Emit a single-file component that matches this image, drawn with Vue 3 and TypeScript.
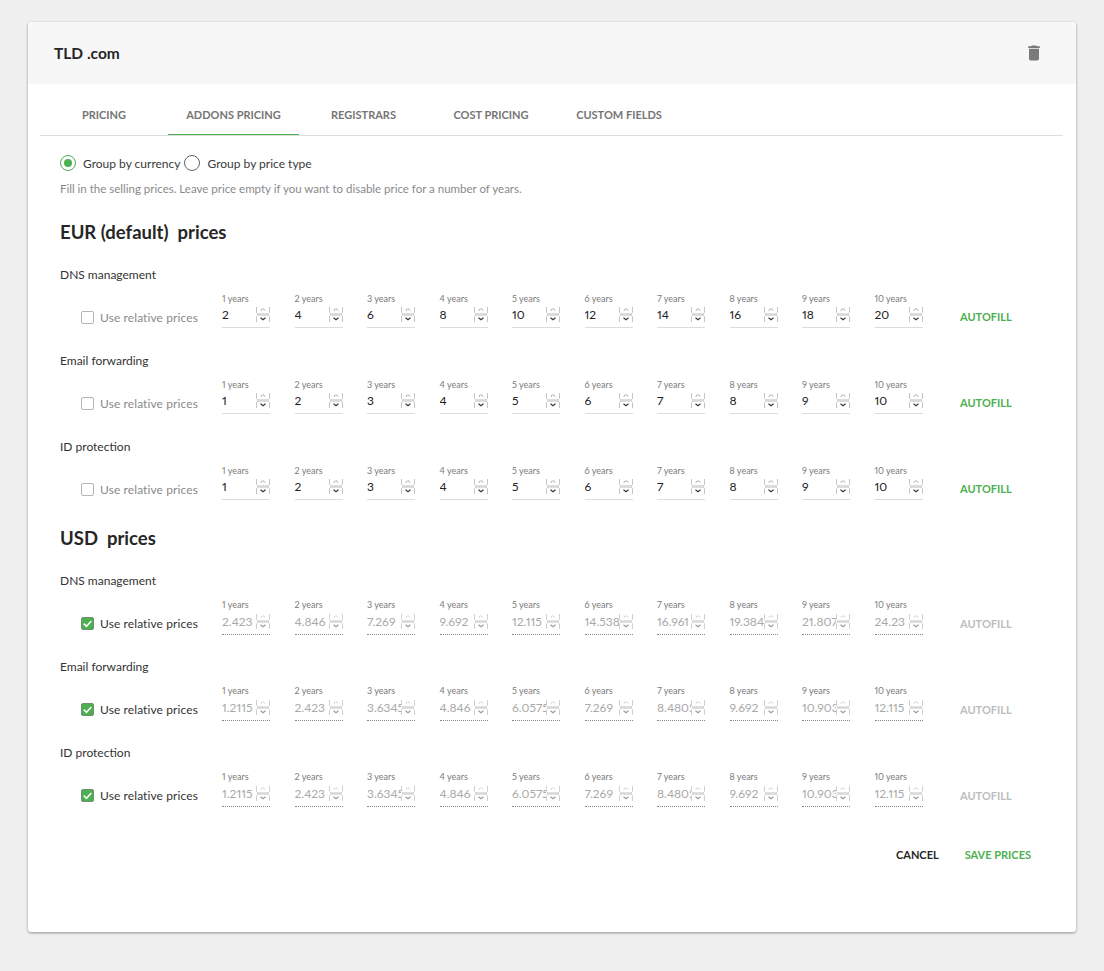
<script setup lang="ts">
interface Addon { name: string; values: string[] }
interface Group { title: string; relative: boolean; addons: Addon[] }

const tabs = ['PRICING', 'ADDONS PRICING', 'REGISTRARS', 'COST PRICING', 'CUSTOM FIELDS']

const seq = (m: number) => Array.from({ length: 10 }, (_, i) => String((i + 1) * m))

const groups: Group[] = [
  {
    title: 'EUR (default)  prices',
    relative: false,
    addons: [
      { name: 'DNS management', values: seq(2) },
      { name: 'Email forwarding', values: seq(1) },
      { name: 'ID protection', values: seq(1) },
    ],
  },
  {
    title: 'USD  prices',
    relative: true,
    addons: [
      { name: 'DNS management', values: ['2.423', '4.846', '7.269', '9.692', '12.115', '14.538', '16.961', '19.384', '21.807', '24.23'] },
      { name: 'Email forwarding', values: ['1.2115', '2.423', '3.6345', '4.846', '6.0575', '7.269', '8.4805', '9.692', '10.9035', '12.115'] },
      { name: 'ID protection', values: ['1.2115', '2.423', '3.6345', '4.846', '6.0575', '7.269', '8.4805', '9.692', '10.9035', '12.115'] },
    ],
  },
]
</script>

<template>
  <div class="page">
    <section class="card">
      <header class="head">
        <h1>TLD .com</h1>
        <svg class="trash" viewBox="0 0 24 24" width="20" height="20"><path d="M19,4H15.5L14.5,3H9.5L8.5,4H5V6H19M6,19A2,2 0 0,0 8,21H16A2,2 0 0,0 18,19V7H6V19Z" /></svg>
      </header>

      <nav class="tabs">
        <div v-for="(t, i) in tabs" :key="t" class="tab" :class="{ active: i === 1 }">{{ t }}</div>
      </nav>

      <div class="body">
        <div class="radios">
          <label class="radio"><span class="dot on"></span>Group by currency</label>
          <label class="radio"><span class="dot"></span>Group by price type</label>
        </div>
        <p class="hint">Fill in the selling prices. Leave price empty if you want to disable price for a number of years.</p>

        <div v-for="g in groups" :key="g.title" class="group">
          <h2>{{ g.title }}</h2>
          <div v-for="a in g.addons" :key="a.name" class="addon">
            <div class="addon-name">{{ a.name }}</div>
            <div class="controls">
              <label class="check" :class="{ on: g.relative }">
                <span class="box">
                  <svg v-if="g.relative" viewBox="0 0 13 13" width="13" height="13"><path d="M2.8 6.6l2.7 2.7 4.8-5.2" fill="none" stroke="#fff" stroke-width="1.5" /></svg>
                </span>
                Use relative prices
              </label>
              <div class="fields">
                <div v-for="(v, i) in a.values" :key="i" class="field" :class="{ off: g.relative }">
                  <span class="year">{{ i + 1 }} years</span>
                  <div class="input-wrap">
                    <input type="number" :value="v" :disabled="g.relative" />
                    <svg class="spin" viewBox="0 0 14 15" width="14" height="15">
                      <path class="spin-frame" d="M.5 0V5.5L2 7H12L13.5 5.5V0M.5 15V9.5L2 8H12L13.5 9.5V15" />
                      <path class="spin-band" d="M1 6.5H13V8.5H1Z" />
                      <path class="spin-up" d="M4.8 3.4L7 1.6L9.2 3.4" />
                      <path class="spin-down" d="M4.5 10.8L7 12.8L9.5 10.8" />
                    </svg>
                  </div>
                </div>
              </div>
              <span class="autofill" :class="{ off: g.relative }">AUTOFILL</span>
            </div>
          </div>
        </div>

        <div class="actions">
          <span class="cancel">CANCEL</span>
          <span class="save">SAVE PRICES</span>
        </div>
      </div>
    </section>
  </div>
</template>

<style>
html, body { background: #f0f0f0; }
</style>

<style scoped>
.page {
  padding: 22px 28px 39px;
  font-family: Lato, "Liberation Sans", sans-serif;
  font-variant-numeric: proportional-nums;
  color: #2b2b2b;
}
.card {
  height: 910px;
  background: #fff;
  border-radius: 3px;
  box-shadow: 0 1px 3px rgba(0, 0, 0, 0.4);
  overflow: hidden;
}
.head {
  height: 62px;
  background: #f7f7f7;
  display: flex;
  align-items: center;
  justify-content: space-between;
  padding: 0 32px 0 26px;
}
.head h1 {
  margin: 0;
  font-size: 15.5px;
  font-weight: 700;
  color: #262626;
}
.trash { fill: #7a7a7a; }
.tabs {
  margin: 0 13px 0 12px;
  display: grid;
  grid-template-columns: 128px 131px 129px 126px 130px;
  grid-template-rows: 51px;
  border-bottom: 1px solid #dedede;
}
.tab {
  display: flex;
  align-items: center;
  justify-content: center;
  box-sizing: border-box;
  height: 51px;
  padding-top: 10px;
  border-bottom: 1px solid transparent;
  font-size: 11px;
  font-weight: 700;
  color: #757575;
}
.tab.active { border-bottom-color: #4caf50; }
.body { padding: 19px 32px 0; }
.radios { display: flex; gap: 3px; }
.radio {
  display: flex;
  align-items: center;
  gap: 7px;
  font-size: 12px;
  height: 16px;
  color: #3a3a3a;
}
.radio + .radio { margin-left: 1px; }
.dot {
  width: 16px;
  height: 16px;
  box-sizing: border-box;
  border: 1px solid #666;
  border-radius: 50%;
  display: block;
  position: relative;
}
.dot.on { border-color: #4caf50; }
.dot.on::after {
  content: "";
  position: absolute;
  inset: 3px;
  border-radius: 50%;
  background: #4caf50;
}
.hint {
  margin: 10px 0 0;
  font-size: 11.5px;
  line-height: 16px;
  color: #8a8a8a;
}
.group h2 {
  margin: 0;
  padding-top: 23px;
  height: 24px;
  line-height: 24px;
  font-size: 18.5px;
  font-weight: 700;
  color: #262626;
  white-space: pre;
  box-sizing: content-box;
}
.group + .group h2 { padding-top: 1px; }
.addon { height: 86px; }
.group h2 + .addon { margin-top: 23px; }
.addon-name {
  font-size: 12px;
  line-height: 16px;
  color: #333;
}
.controls {
  display: flex;
  align-items: flex-start;
  margin-top: 11px;
  padding-left: 21px;
}
.check {
  width: 141px;
  margin-top: 15px;
  display: flex;
  align-items: center;
  gap: 6px;
  font-size: 12px;
  letter-spacing: 0.1px;
  height: 16px;
  color: #8a8a8a;
}
.check.on { color: #333; }
.box {
  width: 13px;
  height: 13px;
  box-sizing: border-box;
  border: 1px solid #b5b5b5;
  border-radius: 2px;
  display: block;
}
.check.on .box {
  background: #4caf50;
  border-color: #6f8f70;
}
.box svg { display: block; margin: -1px; }
.fields {
  display: grid;
  grid-template-columns: repeat(10, 48px);
  column-gap: 24.5px;
}
.field { display: flex; flex-direction: column; }
.year {
  font-size: 9px;
  line-height: 10px;
  color: #7b7b7b;
}
.input-wrap {
  display: flex;
  align-items: center;
  width: 48px;
  height: 24px;
  box-sizing: border-box;
  border-bottom: 1px solid #dcdcdc;
  padding-bottom: 2px;
}
.input-wrap input {
  width: 34px;
  flex: none;
  height: 18px;
  margin: 0;
  padding: 0;
  border: 0;
  outline: 0;
  background: transparent;
  font: 12px Lato, "Liberation Sans", sans-serif;
  font-variant-numeric: proportional-nums;
  color: #222;
  appearance: textfield;
}
.input-wrap input::-webkit-inner-spin-button { display: none; }
.spin { flex: none; display: block; }
.spin-frame { fill: #fff; stroke: #c4c4c4; stroke-width: 1; }
.spin-band { fill: #d9d9d9; }
.spin-up { fill: none; stroke: #555; stroke-width: 1; stroke-dasharray: 1.2 1.2; }
.spin-down { fill: none; stroke: #333; stroke-width: 1.1; }
.field.off .input-wrap { border-bottom: 1px dotted #888; margin-top: 1px; }
.field.off input { color: #a9a9a9; -webkit-text-fill-color: #a9a9a9; opacity: 1; }
.field.off .spin-frame { stroke: #d0d0d0; }
.field.off .spin-up { stroke: #aaa; }
.field.off .spin-down { stroke: #999; }
.autofill {
  margin: 16px 0 0 37.5px;
  font-size: 11px;
  line-height: 14px;
  font-weight: 700;
  color: #4caf50;
}
.autofill.off { color: #bdbdbd; margin-top: 17px; }
.actions {
  display: flex;
  justify-content: flex-end;
  gap: 26px;
  margin-top: 17px;
  padding-right: 13px;
  font-size: 11px;
  line-height: 14px;
  font-weight: 700;
}
.cancel { color: #262626; }
.save { color: #4caf50; }
</style>
